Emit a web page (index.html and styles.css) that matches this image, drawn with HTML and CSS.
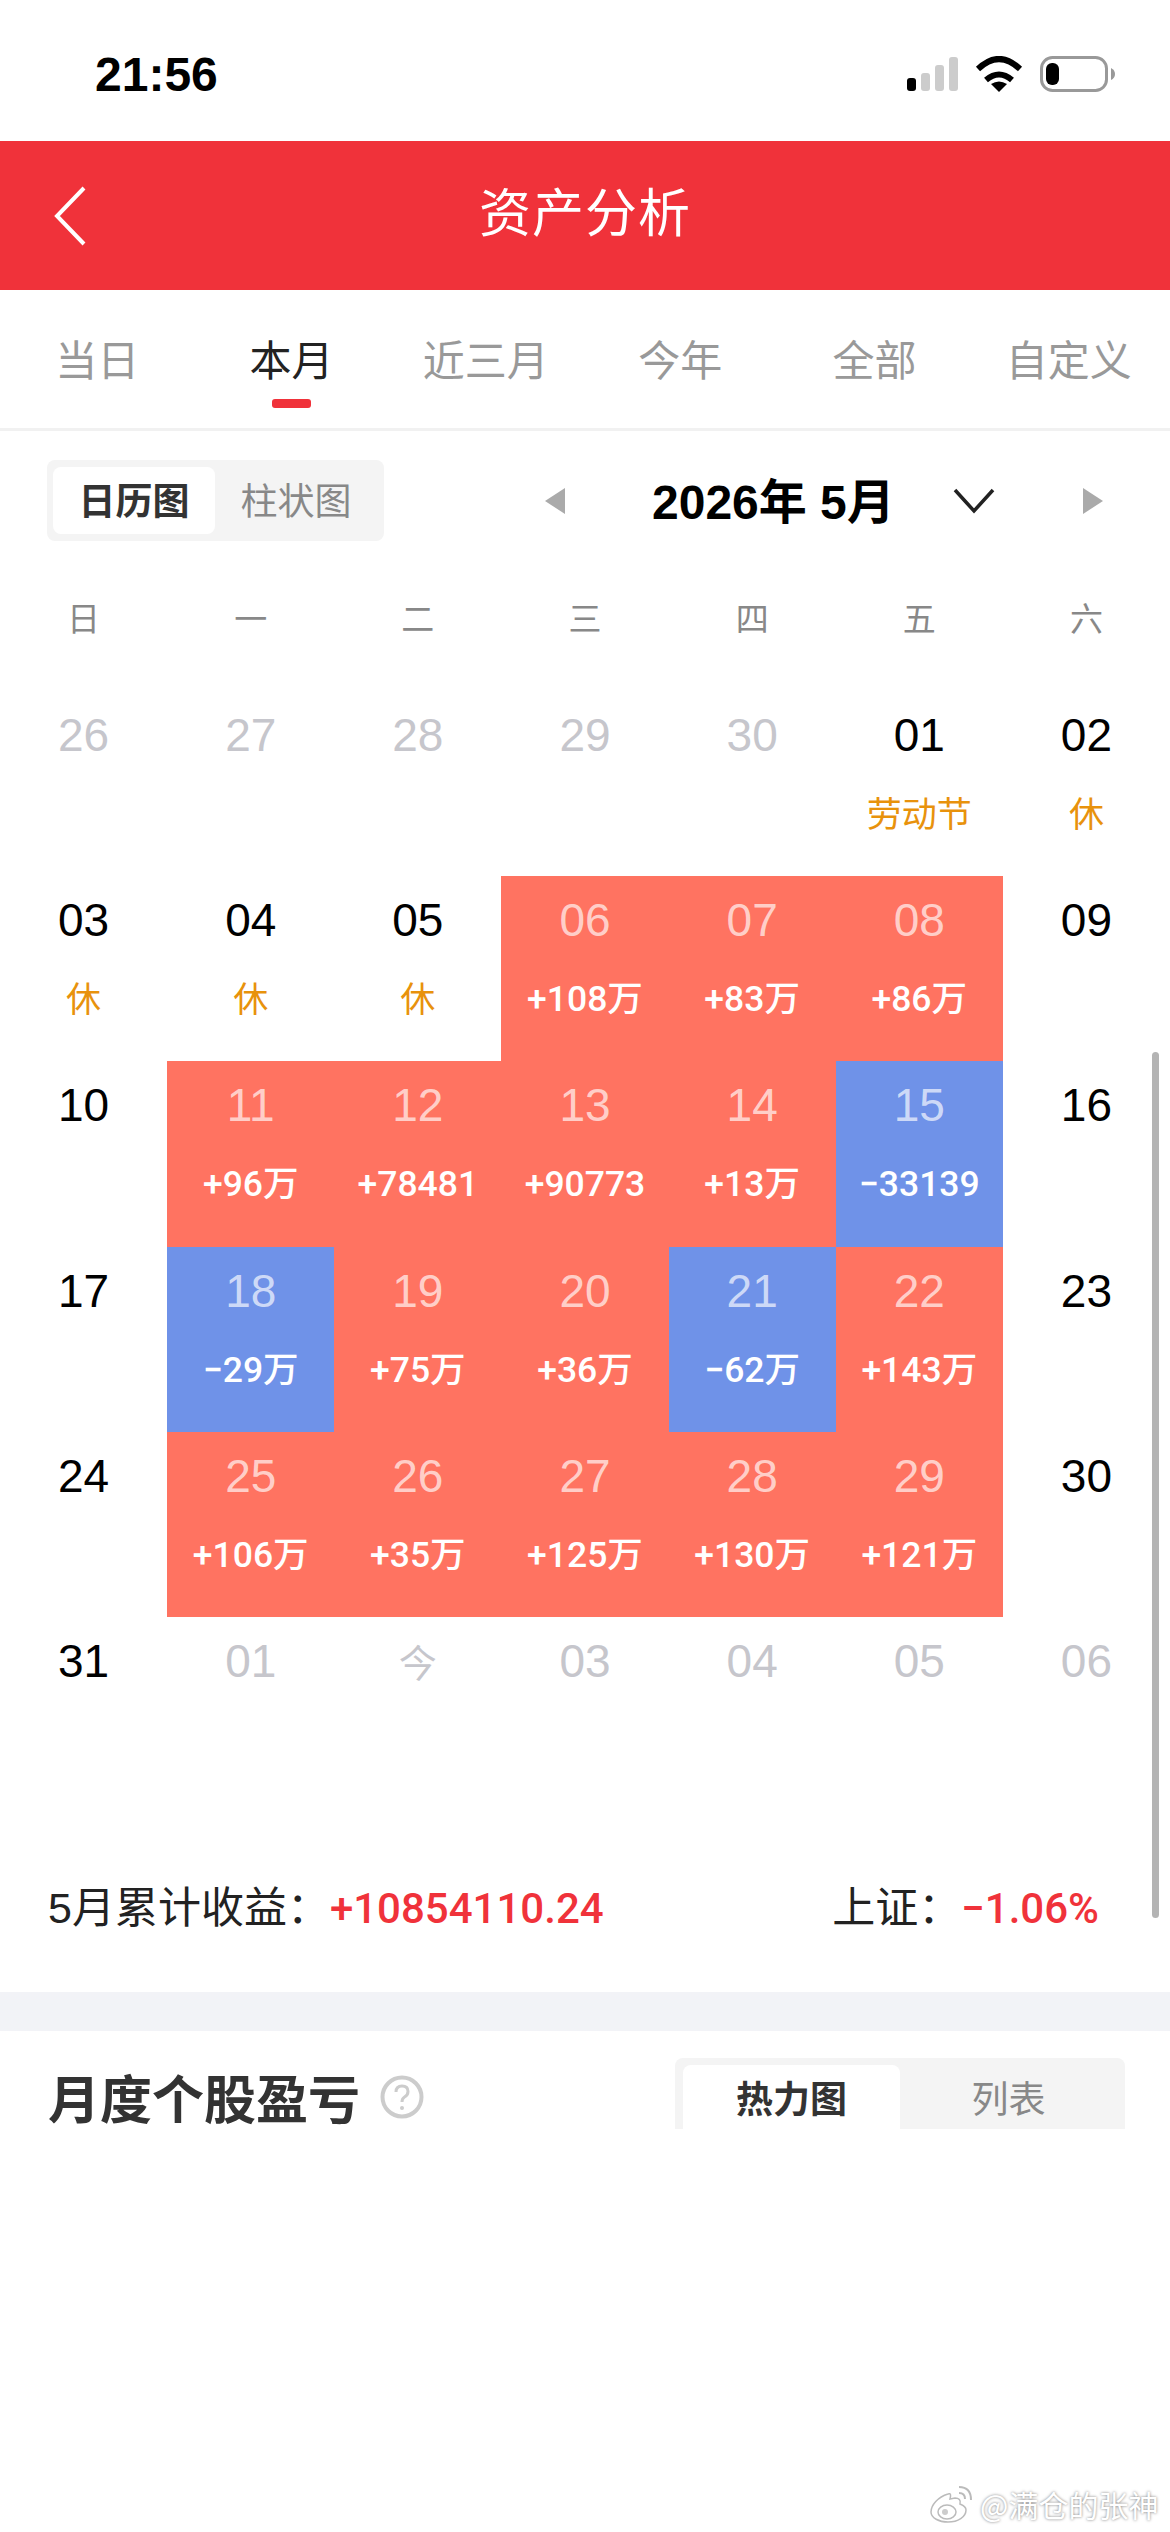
FILE: index.html
```html
<!DOCTYPE html>
<html>
<head>
<meta charset="utf-8">
<title>资产分析</title>
<link rel="stylesheet" href="styles.css">
</head>
<body>
<div class="page">

<div class="status-bar">
    <span class="time">21:56</span>
    <div class="status-icons">
        <svg width="51" height="34" viewBox="0 0 51 34">
            <rect x="0" y="21" width="9" height="13" rx="3" fill="#000"/>
            <rect x="14" y="16" width="9" height="18" rx="3" fill="#ccc"/>
            <rect x="28" y="8" width="9" height="26" rx="3" fill="#ccc"/>
            <rect x="42" y="0" width="9" height="34" rx="3" fill="#ccc"/>
        </svg>
        <svg width="48" height="36" viewBox="0 0 48 36">
            <path d="M3 13 Q24 -7 45 13" fill="none" stroke="#000" stroke-width="6"/>
            <path d="M11 24 Q24 13 37 24" fill="none" stroke="#000" stroke-width="6"/>
            <path d="M16 28 Q24 23 32 28 L24 36 Z" fill="#000"/>
        </svg>
        <svg width="75" height="36" viewBox="0 0 75 36">
            <rect x="1.5" y="1.5" width="65" height="33" rx="11" fill="none" stroke="#999" stroke-width="3"/>
            <rect x="6" y="7" width="13" height="22" rx="6" fill="#000"/>
            <path d="M71 12 Q75 14 75 18 Q75 22 71 24 Z" fill="#999"/>
        </svg>
    </div>
</div>

<div class="app-header">
    <svg class="back" width="32" height="60" viewBox="0 0 32 60">
        <path d="M30 2 L3 30 L30 58" fill="none" stroke="#fff" stroke-width="4"/>
    </svg>
    <h1 class="app-title">资产分析</h1>
    <span></span>
</div>

<div class="tabs">
    <div class="tab">当日</div>
    <div class="tab active">本月</div>
    <div class="tab">近三月</div>
    <div class="tab">今年</div>
    <div class="tab">全部</div>
    <div class="tab">自定义</div>
</div>

<div class="toolbar">
    <div class="segment chart-switch">
        <div class="seg-item on">日历图</div>
        <div class="seg-item">柱状图</div>
    </div>
    <div class="month-nav">
        <svg width="20" height="26" viewBox="0 0 20 26"><path d="M20 0 V26 L0 13 Z" fill="#aaa"/></svg>
        <span class="month-label">2026年 5月</span>
        <svg class="month-drop" width="42" height="26" viewBox="0 0 42 26"><path d="M2 2 L21 23 L40 2" fill="none" stroke="#222" stroke-width="3.5"/></svg>
        <svg class="month-next" width="20" height="26" viewBox="0 0 20 26"><path d="M0 0 V26 L20 13 Z" fill="#aaa"/></svg>
    </div>
</div>

<div class="weekdays">
    <span>日</span><span>一</span><span>二</span><span>三</span><span>四</span><span>五</span><span>六</span>
</div>

<div class="calendar">
    <div class="cell muted"><b>26</b></div>
    <div class="cell muted"><b>27</b></div>
    <div class="cell muted"><b>28</b></div>
    <div class="cell muted"><b>29</b></div>
    <div class="cell muted"><b>30</b></div>
    <div class="cell"><b>01</b><i class="rest">劳动节</i></div>
    <div class="cell"><b>02</b><i class="rest">休</i></div>

    <div class="cell"><b>03</b><i class="rest">休</i></div>
    <div class="cell"><b>04</b><i class="rest">休</i></div>
    <div class="cell"><b>05</b><i class="rest">休</i></div>
    <div class="cell up"><b>06</b><i>+108万</i></div>
    <div class="cell up"><b>07</b><i>+83万</i></div>
    <div class="cell up"><b>08</b><i>+86万</i></div>
    <div class="cell"><b>09</b></div>

    <div class="cell"><b>10</b></div>
    <div class="cell up"><b>11</b><i>+96万</i></div>
    <div class="cell up"><b>12</b><i>+78481</i></div>
    <div class="cell up"><b>13</b><i>+90773</i></div>
    <div class="cell up"><b>14</b><i>+13万</i></div>
    <div class="cell down"><b>15</b><i>−33139</i></div>
    <div class="cell"><b>16</b></div>

    <div class="cell"><b>17</b></div>
    <div class="cell down"><b>18</b><i>−29万</i></div>
    <div class="cell up"><b>19</b><i>+75万</i></div>
    <div class="cell up"><b>20</b><i>+36万</i></div>
    <div class="cell down"><b>21</b><i>−62万</i></div>
    <div class="cell up"><b>22</b><i>+143万</i></div>
    <div class="cell"><b>23</b></div>

    <div class="cell"><b>24</b></div>
    <div class="cell up"><b>25</b><i>+106万</i></div>
    <div class="cell up"><b>26</b><i>+35万</i></div>
    <div class="cell up"><b>27</b><i>+125万</i></div>
    <div class="cell up"><b>28</b><i>+130万</i></div>
    <div class="cell up"><b>29</b><i>+121万</i></div>
    <div class="cell"><b>30</b></div>

    <div class="cell"><b>31</b></div>
    <div class="cell muted"><b>01</b></div>
    <div class="cell muted"><b class="today">今</b></div>
    <div class="cell muted"><b>03</b></div>
    <div class="cell muted"><b>04</b></div>
    <div class="cell muted"><b>05</b></div>
    <div class="cell muted"><b>06</b></div>
</div>

<div class="summary">
    <div>5月累计收益：<span class="gain">+10854110.24</span></div>
    <div>上证：<span class="gain">−1.06%</span></div>
</div>

<div class="band"></div>

<div class="section-head">
    <div class="section-title">
        <h2>月度个股盈亏</h2>
        <svg width="44" height="44" viewBox="0 0 44 44">
            <circle cx="22" cy="22" r="19.5" fill="none" stroke="#ccc" stroke-width="4"/>
            <path d="M16 17 Q16 11 22 11 Q28 11 28 16.5 Q28 20 24.5 22 Q22 23.5 22 27" fill="none" stroke="#ccc" stroke-width="3"/>
            <circle cx="22" cy="33" r="2" fill="#ccc"/>
        </svg>
    </div>
    <div class="segment view-switch">
        <div class="seg-item on">热力图</div>
        <div class="seg-item">列表</div>
    </div>
</div>

<div class="scrollbar"></div>

<div class="watermark">
    <svg width="44" height="38" viewBox="0 0 44 38">
        <path d="M18 9 C8 12 1 20 1 27 C1 33 9 37 18 37 C28 37 36 32 36 25 C36 21 32 20 30 19 C31 15 29 13 25 13 L20 14 C21 10 21 8 18 9 Z" fill="#fff" stroke="#bbb" stroke-width="1.5"/>
        <ellipse cx="17" cy="27" rx="9" ry="7" fill="#fff" stroke="#bbb" stroke-width="1.5"/>
        <circle cx="15" cy="27" r="3" fill="#ccc"/>
        <path d="M29 2 Q41 2 41 15 M29 8 Q35 8 35 14" fill="none" stroke="#bbb" stroke-width="2"/>
    </svg>
    <span>@满仓的张神</span>
</div>

</div>
</body>
</html>
```

FILE: styles.css
```css
* {
    box-sizing: border-box;
}
body {
    margin: 0;
    background: #fff;
    font-family: "Liberation Sans", "Noto Sans CJK SC", sans-serif;
}
.page {
    position: relative;
    width: 1170px;
    height: 2532px;
    overflow: hidden;
    background: #fff;
}

/* status bar */
.status-bar {
    height: 141px;
    padding: 7px 55px 0 95px;
    display: flex;
    align-items: center;
    justify-content: space-between;
}
.time {
    font-size: 48px;
    font-weight: bold;
    color: #000;
}
.status-icons {
    display: flex;
    align-items: center;
    gap: 17px;
}

/* red header */
.app-header {
    height: 149px;
    background: #f0323a;
    display: grid;
    grid-template-columns: 1fr auto 1fr;
    align-items: center;
}
.back {
    margin-left: 54px;
}
.app-title {
    margin: 0 0 12px;
    font-size: 52px;
    font-weight: normal;
    letter-spacing: 1px;
    color: #fff;
    font-family: "Noto Sans CJK SC", sans-serif;
}

/* range tabs */
.tabs {
    height: 141px;
    padding-right: 4px;
    display: flex;
    border-bottom: 3px solid #f1f1f1;
}
.tab {
    flex: 1;
    padding-top: 38px;
    text-align: center;
    font-size: 42px;
    line-height: 60px;
    color: #999;
    font-family: "Noto Sans CJK SC", sans-serif;
}
.tab.active {
    color: #222;
}
.tab.active::after {
    content: "";
    display: block;
    width: 39px;
    height: 9px;
    margin: 11px auto 0;
    border-radius: 3px;
    background: #f0323a;
}

/* segmented control */
.segment {
    display: flex;
    background: #f4f4f4;
    border-radius: 8px;
    font-family: "Noto Sans CJK SC", sans-serif;
    font-size: 37px;
    color: #888;
}
.seg-item {
    text-align: center;
}
.seg-item.on {
    background: #fff;
    border-radius: 8px;
    font-weight: bold;
    color: #333;
}

.toolbar {
    height: 162px;
    padding: 29px 0 0 47px;
    display: flex;
    align-items: flex-start;
}
.chart-switch {
    width: 337px;
    height: 81px;
    padding: 7px 6px;
    line-height: 64px;
}
.chart-switch .seg-item {
    width: 162px;
}
.month-nav {
    height: 81px;
    margin-left: 161px;
    display: flex;
    align-items: center;
}
.month-label {
    margin: 0 0 5px 87px;
    width: 240px;
    font-size: 48px;
    font-weight: bold;
    white-space: nowrap;
    color: #000;
}
.month-drop {
    margin-left: 61px;
}
.month-next {
    margin-left: 88px;
}

/* calendar */
.weekdays {
    height: 50px;
    margin-bottom: 48px;
    display: grid;
    grid-template-columns: repeat(7, 1fr);
    text-align: center;
    font-size: 33px;
    line-height: 48px;
    color: #888;
    font-family: "Noto Sans CJK SC", sans-serif;
}
.calendar {
    display: grid;
    grid-template-columns: repeat(7, 1fr);
    grid-auto-rows: 185.2px;
}
.cell {
    padding-top: 18px;
    display: flex;
    flex-direction: column;
    align-items: center;
}
.cell b {
    font-size: 46px;
    font-weight: normal;
    line-height: 52px;
    color: #000;
}
.cell i {
    margin-top: 31px;
    font-style: normal;
    font-size: 35.5px;
    font-weight: 500;
    line-height: 44px;
    white-space: nowrap;
    color: #fff;
    font-family: Roboto, "Noto Sans CJK SC", sans-serif;
}
.cell i.rest {
    margin-top: 29px;
    font-size: 35px;
    font-weight: normal;
    color: #e8920c;
    font-family: "Noto Sans CJK SC", sans-serif;
}
.cell.muted b {
    color: #c6c6cc;
}
.cell b.today {
    font-size: 38px;
    font-family: "Noto Sans CJK SC", sans-serif;
}
.cell.up {
    background: #ff7361;
}
.cell.down {
    background: #6f92e8;
}
.cell.up b, .cell.down b {
    color: rgba(255, 255, 255, 0.68);
}

/* month totals */
.summary {
    padding: 82px 71px 59px 48px;
    display: flex;
    justify-content: space-between;
    font-size: 43px;
    line-height: 48px;
    color: #222;
    font-family: "Liberation Sans", "Noto Sans CJK SC", sans-serif;
}
.gain {
    font-family: Roboto, sans-serif;
    font-size: 42px;
    font-weight: 500;
    color: #f0323a;
}
.band {
    height: 39px;
    background: #f2f3f7;
}

.section-head {
    height: 98px;
    padding: 27px 45px 0 48px;
    display: flex;
    justify-content: space-between;
    align-items: flex-start;
}
.section-title {
    height: 78px;
    display: flex;
    align-items: center;
    gap: 20px;
}
.section-title h2 {
    margin: 0;
    font-size: 52px;
    font-weight: bold;
    line-height: 60px;
    color: #333;
    font-family: "Noto Sans CJK SC", sans-serif;
}
.view-switch {
    width: 450px;
    height: 71px;
    padding: 7px 8px 0;
    line-height: 64px;
    border-radius: 8px 8px 0 0;
}
.view-switch .seg-item {
    width: 217px;
}
.view-switch .seg-item.on {
    border-radius: 8px 8px 0 0;
}
.view-switch .seg-item + .seg-item {
    flex: 1;
}

.scrollbar {
    position: absolute;
    top: 1052px;
    left: 1152px;
    width: 7px;
    height: 866px;
    border-radius: 4px;
    background: #b4b4b4;
}
.watermark {
    position: absolute;
    left: 930px;
    top: 2482px;
    display: flex;
    align-items: center;
    gap: 6px;
    font-family: "Noto Sans CJK SC", sans-serif;
    font-size: 30px;
    color: #fff;
    text-shadow: 0 0 3px #777;
}
```
